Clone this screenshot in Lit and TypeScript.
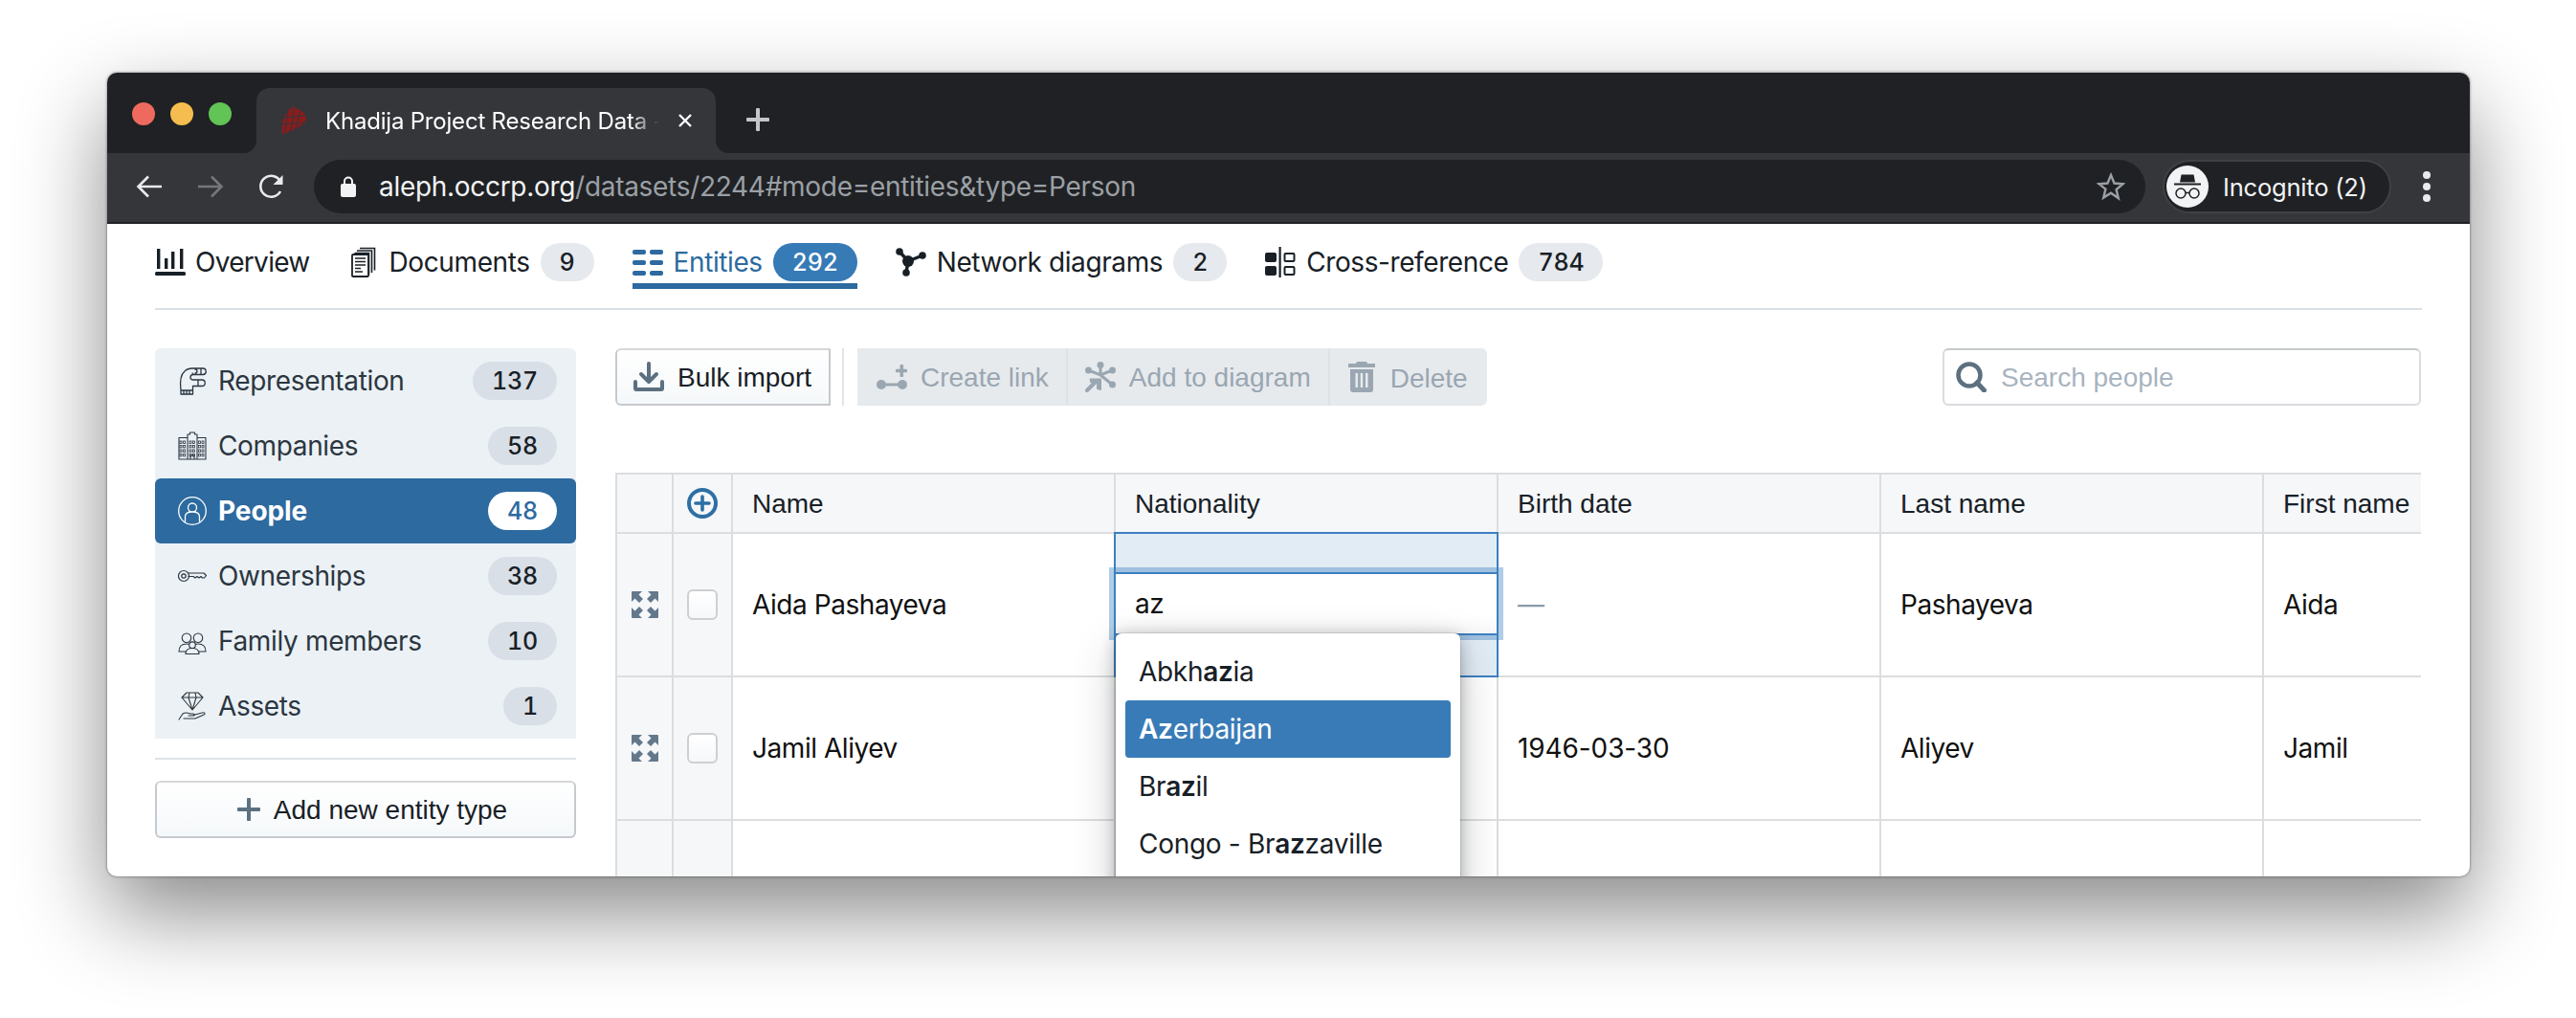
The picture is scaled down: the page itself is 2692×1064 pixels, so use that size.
import { LitElement, css, html, svg } from "lit";
import { customElement } from "lit/decorators.js";

const line = (d: string, w = 1.3) => svg`<path d=${d} fill="none" stroke="currentColor" stroke-width=${w} stroke-linecap="round" stroke-linejoin="round"/>`;

const companyWindows = () => {
  const out = [];
  for (const x of [3, 6.6, 13, 16.4, 22.4, 26]) {
    for (const y of [10, 14.5, 19, 23.5]) {
      out.push(svg`<rect x=${x - 1} y=${y} width="2" height="2.4" fill="none" stroke="currentColor" stroke-width="0.8"/>`);
    }
  }
  return out;
};

const arrowCorner = "M1 0h10L7.500 3.500l4.500 4.500-4 4-4.500-4.500L0 11V1a1 1 0 0 1 1-1z";

const ICONS: Record<string, any> = {
  overview: html`<svg width="32" height="28" viewBox="0 0 32 28" fill="currentColor"><rect x="0" y="24" width="32" height="4" rx="1.5"/><rect x="2" y="0" width="3.4" height="21"/><rect x="10" y="10" width="3.4" height="11"/><rect x="17" y="3" width="3.4" height="18"/><rect x="26" y="0" width="3.4" height="21"/></svg>`,
  documents: html`<svg width="30" height="32" viewBox="-1 0 30 32"><path d="M9 1.500h15.500v23M6 4h15.500v23M3.500 6.500H18.500v23" fill="none" stroke="currentColor" stroke-width="1.6"/><rect x="1" y="8" width="17" height="23" rx="1" fill="#fff" stroke="currentColor" stroke-width="1.800"/><path d="M4 12h11M4 15.500h11M4 19h11M4 22.500h6M4 26h8" stroke="currentColor" stroke-width="1.600"/></svg>`,
  entities: html`<svg width="32" height="29" viewBox="0 0 32 29" fill="currentColor"><rect x="0" y="1" width="14" height="5" rx="2"/><rect x="18" y="1" width="14" height="5" rx="2"/><rect x="0" y="12" width="14" height="5" rx="2"/><rect x="18" y="12" width="14" height="5" rx="2"/><rect x="0" y="23" width="14" height="5" rx="2"/><rect x="18" y="23" width="14" height="5" rx="2"/></svg>`,
  network: html`<svg width="32" height="30" viewBox="0 0 32 30" fill="currentColor"><circle cx="4" cy="4" r="3.800"/><circle cx="28" cy="8" r="3.800"/><circle cx="13" cy="14" r="6"/><circle cx="11" cy="26" r="3.800"/><path d="M4 4l9 10 15-6M13 14l-2 12" fill="none" stroke="currentColor" stroke-width="3.500"/></svg>`,
  cross: html`<svg width="32" height="32" viewBox="0 0 32 32"><rect x="0" y="6" width="12" height="10" rx="2" fill="currentColor"/><rect x="0" y="20" width="12" height="10" rx="2" fill="currentColor"/><rect x="14.500" y="0" width="2.200" height="32" fill="currentColor"/><rect x="20.500" y="7" width="10" height="8" rx="1" fill="none" stroke="currentColor" stroke-width="2"/><rect x="20.500" y="21" width="10" height="8" rx="1" fill="none" stroke="currentColor" stroke-width="2"/></svg>`,
  bulk: html`<svg width="32" height="32" viewBox="0 0 32 32" fill="none" stroke="currentColor" stroke-width="4" stroke-linecap="round" stroke-linejoin="round"><path d="M16 2v19M8 13l8 8 8-8"/><path d="M2 21v7a1 1 0 0 0 1 1h26a1 1 0 0 0 1-1v-7"/></svg>`,
  link: html`<svg width="32" height="28" viewBox="0 0 32 28" fill="currentColor"><circle cx="5" cy="22" r="5"/><circle cx="27" cy="22" r="5"/><rect x="5" y="20.500" width="22" height="3"/><rect x="24.500" y="1" width="3.600" height="13" rx="1"/><rect x="20" y="5.700" width="12" height="3.600" rx="1"/></svg>`,
  diagram: html`<svg width="32" height="32" viewBox="0 0 32 32" fill="currentColor"><circle cx="16" cy="3.500" r="3.500"/><circle cx="3.500" cy="9" r="3.500"/><circle cx="28.500" cy="9" r="3.500"/><circle cx="28.500" cy="24" r="3.500"/><path d="M16 3.500V14M3.500 9L16 14l12.500-5M16 14l12.500 10" fill="none" stroke="currentColor" stroke-width="3"/><path d="M2 30l10-10" fill="none" stroke="currentColor" stroke-width="4" stroke-linecap="round"/><path d="M5 18h11.500v11.500l-4-1V22H6z" stroke="currentColor" stroke-width="1"/></svg>`,
  trash: html`<svg width="28" height="32" viewBox="0 0 28 32" fill="currentColor"><path d="M10 0h8a2 2 0 0 1 2 2h8v4H0V2h8a2 2 0 0 1 2-2z"/><path fill-rule="evenodd" d="M2 8h24v21a3 3 0 0 1-3 3H5a3 3 0 0 1-3-3zM7.500 12v15h2.500V12zM12.700 12v15h2.500V12zM18 12v15h2.500V12z"/></svg>`,
  search: html`<svg width="32" height="32" viewBox="0 0 32 32" fill="none" stroke="currentColor"><circle cx="14" cy="14" r="11.500" stroke-width="4.500"/><path d="M22 22l7.500 8" stroke-width="5" stroke-linecap="round"/></svg>`,
  expand: html`<svg width="28" height="28" viewBox="0 0 28 28" fill="currentColor"><path d=${arrowCorner}/><path d=${arrowCorner} transform="matrix(-1 0 0 1 28 0)"/><path d=${arrowCorner} transform="matrix(1 0 0 -1 0 28)"/><path d=${arrowCorner} transform="matrix(-1 0 0 -1 28 28)"/></svg>`,
  addCircle: html`<svg width="32" height="32" viewBox="0 0 32 32" fill="none" stroke="currentColor"><circle cx="16" cy="16" r="14" stroke-width="4"/><path d="M16 9v14M9 16h14" stroke-width="3.600" stroke-linecap="round"/></svg>`,
  plus: html`<svg width="24" height="24" viewBox="0 0 24 24" fill="currentColor"><rect x="10" y="0" width="4" height="24" rx="1"/><rect x="0" y="10" width="24" height="4" rx="1"/></svg>`,
  representation: html`<svg width="30" height="30" viewBox="0 0 30 30">${line("M3 25C2 17 2 9 7 5c2-2 5-3 8-3h11a3 3 0 0 1 0 6.500H16l-1-1.500M16 8.500c-2 0-3 1.500-3 3s1.500 2.500 3 2.500h9a3 3 0 0 1 0 6.500h-9.500V25M3 25h12.500v4H3zM6 25v4M9 25v4M12 25v4M18 3a2 2 0 0 1 2 2 2 2 0 0 1-2 2M24 2v6.500M21 14v6")}</svg>`,
  companies: html`<svg width="30" height="30" viewBox="0 0 30 30">${line("M1 6.500h9V29H1zM20 6.500h9V29h-9zM10 3h2.500V1h5v2H20v26H10zM13 29v-4h4v4", 1.1)}${companyWindows()}</svg>`,
  people: html`<svg width="30" height="30" viewBox="0 0 30 30">${line("M7.500 26v-5c0-3.500 3-5 7.500-5s7.500 1.500 7.500 5v5M15 16a4.500 4.500 0 1 0 0-9 4.500 4.500 0 0 0 0 9z")}<circle cx="15" cy="15" r="14.300" fill="none" stroke="currentColor" stroke-width="1.300"/></svg>`,
  ownerships: html`<svg width="30" height="30" viewBox="0 0 30 30"><circle cx="6" cy="15" r="5.500" fill="none" stroke="currentColor" stroke-width="1.200"/><circle cx="6" cy="15" r="2.200" fill="none" stroke="currentColor" stroke-width="1.200"/>${line("M10.500 12H27l2.500 2.500-2 2.500h-2l-1.500-1.500-2 1.500-2-1.500-2 1.500-2-1.500h-5", 1.2)}</svg>`,
  family: html`<svg width="30" height="30" viewBox="0 0 30 30">${line("M1 26c0-6 3-8 8-8 2 0 3 .5 3 .5M29 26c0-6-3-8-8-8-2 0-3 .5-3 .5M1 26h7M22 26h7M8 28.500c0-4 3-6 7-6s7 2 7 6zM9 16.500a4.500 4.500 0 1 0 0-9.500 4.500 4.500 0 0 0 0 9.500zM21 16.500a4.500 4.500 0 1 0 0-9.500 4.500 4.500 0 0 0 0 9.500zM15 22.500a3.300 3.300 0 1 0 0-6.600 3.300 3.300 0 0 0 0 6.600z", 1.1)}</svg>`,
  assets: html`<svg width="30" height="30" viewBox="0 0 30 30">${line("M9 1h12l5 5-11 13L4 6zM4 6h22M11 6l4 13 4-13M12 1l-1 5M18 1l1 5M1 29l4-6c3-2 5-1 8 0h3c2 0 2 2 0 2h-5M16 24.500l9-2.500c3-1 4 1 2 2l-9 4H6", 1.1)}</svg>`,
  favicon: html`<svg width="26" height="28" viewBox="0 0 26 28"><path d="M12 0c8 2 14 7 14 13-3 6-12 11-25 15C-1 18 3 5 12 0z" fill="#8a1c1c"/><path d="M7 3L4 26M13 2l-3 23M19 5l-4 18M2 11l22-2M1 18l22-2" stroke="#35363a" stroke-width="1.100" fill="none"/></svg>`,
  back: html`<svg width="28" height="24" viewBox="0 0 28 24" fill="none" stroke="currentColor" stroke-width="2.600"><path d="M27 12H2.500M13 1.500L2.500 12 13 22.500"/></svg>`,
  forward: html`<svg width="28" height="24" viewBox="0 0 28 24" fill="none" stroke="currentColor" stroke-width="2.600"><path d="M1 12h24.500M15 1.500L25.500 12 15 22.500"/></svg>`,
  reload: html`<svg width="28" height="28" viewBox="0 0 28 28"><path d="M23 19a11 11 0 1 1 0-10.500" fill="none" stroke="currentColor" stroke-width="2.600"/><path d="M25.500 2v10h-10z" fill="currentColor"/></svg>`,
  lock: html`<svg width="16" height="22" viewBox="0 0 16 22"><path d="M4 9V5.500a4 4 0 0 1 8 0V9" fill="none" stroke="currentColor" stroke-width="2"/><rect x="0" y="8" width="16" height="14" rx="2" fill="currentColor"/></svg>`,
  star: html`<svg width="30" height="30" viewBox="0 0 30 30"><path d="M15 3l3.500 8.500 9 .7-6.900 5.900 2.200 9L15 21.700 7.200 26.600l2.200-9L2.500 12.200l9-.7z" fill="none" stroke="currentColor" stroke-width="2.400"/></svg>`,
  incognito: html`<svg width="44" height="44" viewBox="0 0 44 44"><circle cx="22" cy="22" r="22" fill="#f1f3f4"/><path d="M15.500 9.500h13l1.500 8H14z" fill="#202124"/><rect x="8" y="18.500" width="28" height="2" fill="#202124"/><circle cx="15" cy="29" r="5" fill="none" stroke="#202124" stroke-width="1.500"/><circle cx="29" cy="29" r="5" fill="none" stroke="#202124" stroke-width="1.500"/><path d="M20 28.500h4" stroke="#202124" stroke-width="1.500"/></svg>`,
};

const NAV = [
  { icon: "overview", label: "Overview" },
  { icon: "documents", label: "Documents", count: "9" },
  { icon: "entities", label: "Entities", count: "292", active: true },
  { icon: "network", label: "Network diagrams", count: "2" },
  { icon: "cross", label: "Cross-reference", count: "784" },
];

const SCHEMAS = [
  { icon: "representation", label: "Representation", count: "137" },
  { icon: "companies", label: "Companies", count: "58" },
  { icon: "people", label: "People", count: "48", active: true },
  { icon: "ownerships", label: "Ownerships", count: "38" },
  { icon: "family", label: "Family members", count: "10" },
  { icon: "assets", label: "Assets", count: "1" },
];

const COLUMNS = ["Name", "Nationality", "Birth date", "Last name", "First name"];

const ROWS = [
  ["Aida Pashayeva", "", "—", "Pashayeva", "Aida"],
  ["Jamil Aliyev", "", "1946-03-30", "Aliyev", "Jamil"],
  ["", "", "", "", ""],
];

@customElement("app-root")
export class AppRoot extends LitElement {
  static styles = css`
    :host {
      display: block;
      width: 2692px;
      height: 1064px;
      overflow: hidden;
      background: #fff;
      font-family: Inter, "Liberation Sans", sans-serif;
      color: #182026;
    }

    * {
      box-sizing: border-box;
    }

    em {
      font-style: normal;
    }

    .page {
      padding: 76px 111px 148px 112px;
      height: 100%;
    }

    .window {
      height: 840px;
      border-radius: 10px;
      overflow: hidden;
      background: #fff;
      box-shadow: 0 38px 92px rgb(0 0 0 / 47%), 0 0 3px rgb(0 0 0 / 55%);
    }

    /* browser chrome */
    .strip {
      display: flex;
      align-items: flex-end;
      height: 84px;
      padding-left: 26px;
      background: #202124;
    }

    .dots {
      display: flex;
      gap: 16px;
      align-self: flex-start;
      margin-top: 31px;
      margin-right: 26px;
    }

    .dot {
      width: 24px;
      height: 24px;
      border-radius: 50%;
    }

    .dot.red { background: #ee6a5f; }
    .dot.yellow { background: #f5bd4f; }
    .dot.green { background: #61c454; }

    .tab {
      position: relative;
      display: flex;
      align-items: center;
      width: 480px;
      height: 68px;
      padding-left: 26px;
      border-radius: 14px 14px 0 0;
      background: #35363a;
    }

    .tab::before,
    .tab::after {
      content: "";
      position: absolute;
      bottom: 0;
      width: 14px;
      height: 14px;
    }

    .tab::before {
      left: -14px;
      background: radial-gradient(circle at 0 0, transparent 14px, #35363a 14.500px);
    }

    .tab::after {
      right: -14px;
      background: radial-gradient(circle at 100% 0, transparent 14px, #35363a 14.500px);
    }

    .title {
      width: 367px;
      margin-left: 20px;
      overflow: hidden;
      white-space: nowrap;
      color: #fff;
      font: 24px Inter, sans-serif;
      letter-spacing: -0.2px;
      -webkit-mask-image: linear-gradient(90deg, #000 87%, transparent 95%);
      mask-image: linear-gradient(90deg, #000 87%, transparent 95%);
    }

    .close {
      width: 14px;
      height: 14px;
      margin-left: 2px;
      color: #fff;
    }

    .newtab {
      display: flex;
      align-self: center;
      margin: 14px 0 0 32px;
      color: #c4c7c9;
    }

    .bar {
      display: flex;
      align-items: center;
      height: 74px;
      padding: 0 0 2px 12px;
      border-bottom: 2px solid #202124;
      background: #35363a;
    }

    .nav-btn {
      display: flex;
      justify-content: center;
      width: 64px;
      color: #e8eaed;
    }

    .nav-btn.off {
      color: #75777b;
    }

    .url {
      display: flex;
      align-items: center;
      width: 1914px;
      height: 56px;
      margin-left: 12px;
      padding: 0 21px 0 28px;
      border-radius: 28px;
      background: #202124;
      color: #9aa0a6;
      font: 28px Inter, sans-serif;
      letter-spacing: -0.3px;
    }

    .url > svg {
      color: #f1f3f4;
      margin-right: 24px;
    }

    .url b {
      font-weight: 400;
      color: #f1f3f4;
    }

    .url .star {
      display: flex;
      margin-left: auto;
    }

    .profile {
      display: flex;
      align-items: center;
      gap: 15px;
      width: 239px;
      height: 56px;
      margin-left: 18px;
      padding-left: 2px;
      border: 2px solid #3f4145;
      border-radius: 28px;
      background: #202124;
      color: #f1f3f4;
      font: 25.500px Inter, sans-serif;
      letter-spacing: -0.2px;
    }

    .kebab {
      display: flex;
      flex-direction: column;
      gap: 4px;
      margin-left: 33px;
    }

    .kebab i {
      width: 8px;
      height: 8px;
      border-radius: 50%;
      background: #e8eaed;
    }

    /* page */
    .content {
      padding: 0 50px;
    }

    .tabs {
      display: flex;
      gap: 40px;
      height: 90px;
      padding-top: 20px;
      border-bottom: 2px solid #d8e1e8;
    }

    .tabs a {
      display: flex;
      align-items: center;
      gap: 11px;
      height: 48px;
      padding-bottom: 8px;
      font-size: 28px;
      letter-spacing: -0.4px;
    }

    .tabs a:first-child {
      gap: 10px;
      margin-right: 2px;
      letter-spacing: -0.7px;
    }

    .tabs a.active {
      color: #2d6a9f;
      box-shadow: 0 -6px 0 #2c6a9f inset;
    }

    .count {
      display: inline-flex;
      align-items: center;
      justify-content: center;
      flex: none;
      min-width: 56px;
      height: 40px;
      padding: 0 20px;
      border-radius: 20px;
      background: #e6e9ed;
      color: #182026;
      font-size: 25px;
      font-weight: 500;
      font-variant-numeric: tabular-nums;
      letter-spacing: -0.2px;
    }

    .tabs a.active .count {
      background: #367ab6;
      color: #fff;
    }

    .body {
      display: grid;
      grid-template-columns: 440px 1887px;
      gap: 41px;
      padding-top: 40px;
    }

    .schemas {
      border-radius: 6px 6px 0 0;
      background: #ebf1f5;
    }

    .schemas a {
      display: flex;
      align-items: center;
      gap: 12px;
      height: 68px;
      padding: 0 20px 0 24px;
      border-radius: 6px;
      color: #2c3640;
      font-size: 28px;
      letter-spacing: -0.35px;
    }

    .schemas a svg {
      flex: none;
    }

    .schemas a .count {
      margin-left: auto;
      background: #d8dfe6;
      color: #182026;
      letter-spacing: -0.2px;
    }

    .schemas a.active {
      background: #2d6a9f;
      color: #fff;
      font-weight: 700;
      letter-spacing: -0.1px;
    }

    .schemas a.active .count {
      background: #fff;
      color: #2d6a9f;
      font-weight: 500;
    }

    .rule {
      height: 2px;
      margin: 20px 0 22px;
      background: #dde3e8;
    }

    .btn {
      display: flex;
      align-items: center;
      font: 28px "Liberation Sans", Arial, sans-serif;
      background: linear-gradient(#fff, #f5f8fa);
      border: 2px solid #c6c9cd;
      border-top-color: #d4d7da;
      color: #182026;
    }

    .btn span,
    .search span,
    .disabled em {
      padding-top: 1px;
    }

    .btn svg {
      color: #5c7080;
      flex: none;
    }

    .add {
      justify-content: center;
      gap: 14px;
      width: 100%;
      height: 60px;
      padding-left: 14px;
      border-radius: 6px;
    }

    .actions {
      display: flex;
      align-items: stretch;
      height: 60px;
    }

    .bulk {
      gap: 14px;
      width: 225px;
      padding-left: 17px;
      border-radius: 6px 0 0 6px;
    }

    .sep {
      width: 2px;
      margin: 0 14px 0 12px;
      background: #e2e5e8;
    }

    .disabled {
      display: flex;
      border-radius: 0 6px 6px 0;
      background: #e6eaed;
      color: #9aa6b1;
      font: 28px "Liberation Sans", Arial, sans-serif;
    }

    .disabled span {
      display: flex;
      align-items: center;
      gap: 14px;
      padding: 0 18px;
      border-right: 2px solid #dde2e6;
    }

    .disabled span:first-child {
      padding-left: 20px;
    }

    .disabled span.delete {
      gap: 16px;
      padding: 0 20px 0 19px;
      border-right: 0;
    }

    .disabled span.delete em {
      padding-top: 4px;
    }

    .search {
      display: flex;
      align-items: center;
      gap: 15px;
      width: 500px;
      height: 60px;
      margin-left: auto;
      padding-left: 12px;
      border: 2px solid #dadcdf;
      border-top-color: #c6c9cc;
      border-radius: 6px;
      color: #a7b4c0;
      font: 28px "Liberation Sans", Arial, sans-serif;
    }

    .search svg {
      color: #5c7080;
    }

    .table-wrap {
      margin-top: 70px;
      overflow: hidden;
    }

    table {
      table-layout: fixed;
      border-collapse: separate;
      border-spacing: 0;
      width: 2123px;
    }

    .c-expand { width: 61px; }
    .c-check { width: 62px; }
    .c-data { width: 400px; }

    th,
    td {
      border-right: 2px solid #dcdddf;
      border-bottom: 2px solid #dcdddf;
      padding: 0 20px;
      text-align: left;
      font-size: 28px;
      font-weight: 400;
      white-space: nowrap;
    }

    th {
      height: 64px;
      padding-top: 2px;
      border-top: 2px solid #dcdddf;
      background: #f5f7f9;
      color: #182026;
      font-family: "Liberation Sans", Arial, sans-serif;
    }

    td {
      height: 150px;
      color: #111;
      letter-spacing: -0.45px;
    }

    td.date {
      letter-spacing: -0.1px;
    }

    th.rail,
    td.rail {
      padding: 0;
      text-align: center;
      background: #f5f7f9;
      line-height: 0;
    }

    th:first-child,
    td:first-child {
      border-left: 2px solid #dcdddf;
    }

    .rail svg {
      color: #64788c;
    }

    th.rail svg {
      color: #2e6fa4;
    }

    .check {
      display: inline-block;
      width: 32px;
      height: 32px;
      border: 2px solid #cdcfd2;
      border-radius: 6px;
      background: linear-gradient(#fff, #f5f8fa);
    }

    .dash {
      color: #8a9ba8;
    }

    td.editing {
      position: relative;
    }

    .cell-focus {
      position: absolute;
      inset: -2px;
      border: 2px solid #3c80c1;
      background: #e2ecf5;
    }

    .editor {
      position: absolute;
      top: 40px;
      left: -2px;
      right: -2px;
      height: 66px;
      padding-left: 20px;
      display: flex;
      align-items: center;
      border: 2px solid #3c80c1;
      outline: 5px solid rgb(60 128 193 / 40%);
      background: linear-gradient(#fff, #fff 70%, #f7f7f7);
      color: #111;
    }

    .menu {
      position: absolute;
      z-index: 2;
      top: 104px;
      left: 0;
      width: 360px;
      padding: 10px 10px 60px;
      border-radius: 6px;
      background: #fff;
      box-shadow: 0 0 0 1px rgb(16 22 26 / 10%), 0 4px 16px rgb(16 22 26 / 30%), 0 16px 48px rgb(16 22 26 / 20%);
      color: #182026;
      letter-spacing: -0.3px;
    }

    .menu div {
      display: flex;
      align-items: center;
      height: 60px;
      padding-left: 14px;
      border-radius: 4px;
      white-space: pre;
    }

    .menu div.on {
      background: #397bb7;
      color: #fff;
    }

    .menu b {
      font-weight: 600;
    }
  `;

  cellClass(value: string) {
    if (value === "—") {
      return "dash";
    }
    return /^\d/.test(value) ? "date" : "";
  }

  renderCell(value: string, col: number, row: number) {
    if (col === 1 && row === 0) {
      return html`<td class="editing">
        <div class="cell-focus"></div>
        <div class="editor">az</div>
        <div class="menu">
          <div>Abkh<b>az</b>ia</div>
          <div class="on"><b>Az</b>erbaijan</div>
          <div>Br<b>az</b>il</div>
          <div>Congo - Br<b>az</b>zaville</div>
        </div>
      </td>`;
    }
    return html`<td class=${this.cellClass(value)}>${value}</td>`;
  }

  render() {
    return html`
      <div class="page">
        <div class="window">
          <div class="strip">
            <div class="dots">
              <div class="dot red"></div>
              <div class="dot yellow"></div>
              <div class="dot green"></div>
            </div>
            <div class="tab">
              ${ICONS.favicon}
              <div class="title">Khadija Project Research Data - Aleph</div>
              <svg class="close" viewBox="0 0 14 14" fill="none" stroke="currentColor" stroke-width="2.400"><path d="M1 1l12 12M13 1L1 13"/></svg>
            </div>
            <div class="newtab">${ICONS.plus}</div>
          </div>
          <div class="bar">
            <div class="nav-btn">${ICONS.back}</div>
            <div class="nav-btn off">${ICONS.forward}</div>
            <div class="nav-btn">${ICONS.reload}</div>
            <div class="url">
              ${ICONS.lock}
              <span><b>aleph.occrp.org</b>/datasets/2244#mode=entities&amp;type=Person</span>
              <span class="star">${ICONS.star}</span>
            </div>
            <div class="profile">${ICONS.incognito}<span>Incognito (2)</span></div>
            <div class="kebab"><i></i><i></i><i></i></div>
          </div>
          <div class="content">
            <div class="tabs">
              ${NAV.map(
                item => html`<a class=${item.active ? "active" : ""}>
                  ${ICONS[item.icon]}<span>${item.label}</span>
                  ${item.count ? html`<span class="count">${item.count}</span>` : ""}
                </a>`
              )}
            </div>
            <div class="body">
              <aside>
                <div class="schemas">
                  ${SCHEMAS.map(
                    item => html`<a class=${item.active ? "active" : ""}>
                      ${ICONS[item.icon]}<span>${item.label}</span>
                      <span class="count">${item.count}</span>
                    </a>`
                  )}
                </div>
                <div class="rule"></div>
                <div class="btn add">${ICONS.plus}<span>Add new entity type</span></div>
              </aside>
              <main>
                <div class="actions">
                  <div class="btn bulk">${ICONS.bulk}<span>Bulk import</span></div>
                  <div class="sep"></div>
                  <div class="disabled">
                    <span>${ICONS.link}<em>Create link</em></span>
                    <span>${ICONS.diagram}<em>Add to diagram</em></span>
                    <span class="delete">${ICONS.trash}<em>Delete</em></span>
                  </div>
                  <div class="search">${ICONS.search}<span>Search people</span></div>
                </div>
                <div class="table-wrap">
                  <table>
                    <colgroup>
                      <col class="c-expand" />
                      <col class="c-check" />
                      ${COLUMNS.map(() => html`<col class="c-data" />`)}
                    </colgroup>
                    <thead>
                      <tr>
                        <th class="rail"></th>
                        <th class="rail">${ICONS.addCircle}</th>
                        ${COLUMNS.map(name => html`<th>${name}</th>`)}
                      </tr>
                    </thead>
                    <tbody>
                      ${ROWS.map(
                        (row, r) => html`<tr>
                          <td class="rail">${row[0] ? ICONS.expand : ""}</td>
                          <td class="rail">${row[0] ? html`<span class="check"></span>` : ""}</td>
                          ${row.map((value, c) => this.renderCell(value, c, r))}
                        </tr>`
                      )}
                    </tbody>
                  </table>
                </div>
              </main>
            </div>
          </div>
        </div>
      </div>
    `;
  }
}
